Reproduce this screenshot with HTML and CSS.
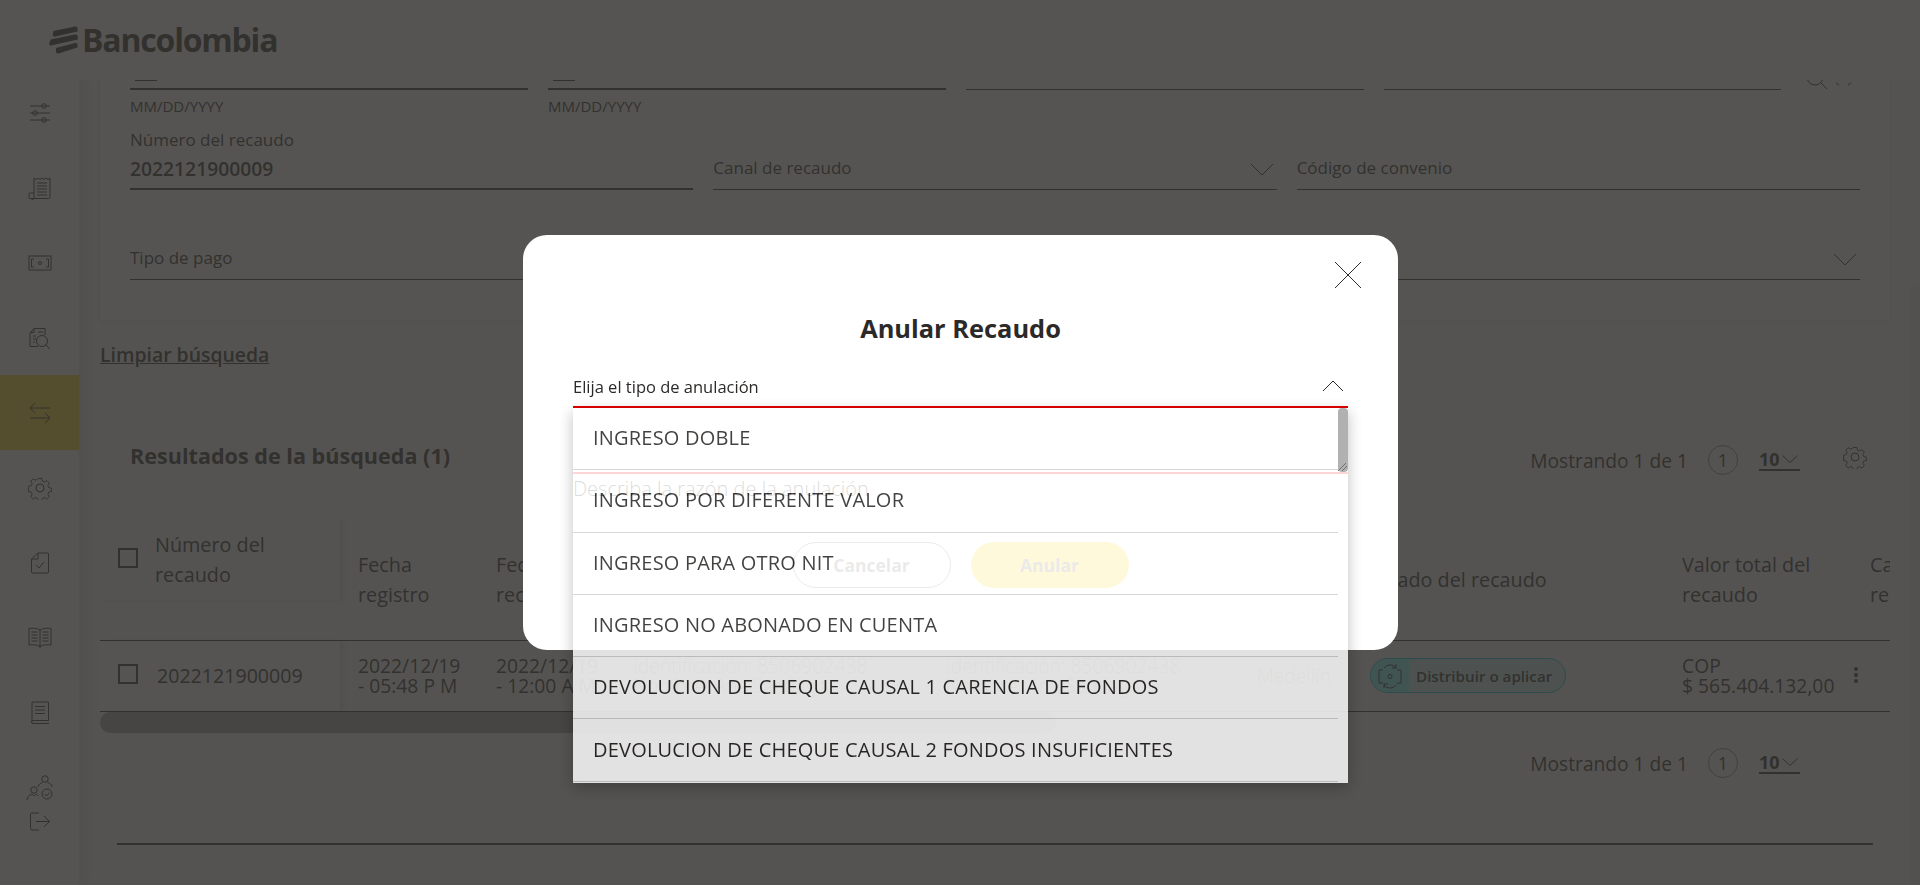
FILE: index.html
```html
<!DOCTYPE html>
<html>
<head>
    <title>Bancolombia - Recaudos</title>
    <meta charset="UTF-8">
    <meta name="viewport" content="width=device-width, initial-scale=1.0">
    <link rel="stylesheet" href="styles.css">
</head>
<body>
    <header class="top-bar">
        <div class="logo">
            <svg class="logo-mark" width="29" height="28" viewBox="0 0 29 28">
                <path d="M4.500 5 L26 .5 Q28.500 0 28.500 2 L28.500 5.500 L6 10.500 Q3.500 11 3.800 8.500 Z"/>
                <path d="M1.500 13.500 L26 8.500 Q28.800 8 28.800 10.500 L28.800 13.500 L2 19.500 Q0 20 .2 17.500 Z"/>
                <path d="M7 22 L26 17 Q28.500 16.500 28.500 19 L28.500 21.500 L9.500 27.500 Q7 28 7 25.500 Z"/>
            </svg>
            <span class="logo-text">Bancolombia</span>
        </div>
    </header>

    <div class="app-shell">
        <nav class="side-nav">
            <a class="nav-item">
                <svg width="22" height="20" viewBox="0 0 22 20"><path d="M1 3h20M1 10h20M1 17h20"/><circle cx="15" cy="3" r="2.300"/><circle cx="6" cy="10" r="2.300"/><circle cx="15" cy="17" r="2.300"/></svg>
            </a>
            <a class="nav-item">
                <svg width="24" height="24" viewBox="0 0 24 24"><path d="M6 17V2l2 1.500L10 2l2 1.500L14 2l2 1.500L18 2l2 1.500L22 2v19a1.500 1.500 0 0 1-1.500 1.500H3"/><path d="M1 18.500a1 1 0 0 1 1-1.500h4v4a1.500 1.500 0 0 1-3 1.500H2a1 1 0 0 1-1-1z"/><path d="M9 7h10M9 10h10M9 13h10M9 16h10M9 19h10"/></svg>
            </a>
            <a class="nav-item">
                <svg width="24" height="16" viewBox="0 0 24 16"><rect x="1" y="1" width="22" height="14"/><path d="M6 4H3.500v8H6M18 4h2.500v8H18"/><circle cx="12" cy="8" r="1.500"/></svg>
            </a>
            <a class="nav-item">
                <svg width="22" height="24" viewBox="0 0 22 24"><path d="M5 2.500h11V9M1 20.500V7l4-4.500v4H1M1 20.500h8"/><path d="M4 10h3M4 13h3M4 16h2M9 6h5"/><circle cx="13" cy="15" r="5.500"/><path d="M17 19l4 4"/></svg>
            </a>
            <a class="nav-item nav-item-active">
                <svg width="22" height="22" viewBox="0 0 22 22"><path d="M21 6H1l5-5M1 6l5 5M1 16h20l-5-5M21 16l-5 5"/></svg>
            </a>
            <a class="nav-item">
                <svg width="24" height="24" viewBox="0 0 24 24"><circle cx="12" cy="12" r="4"/><path d="M10 1.500h4l.6 3 2.300 1 2.600-1.700 2.800 2.800-1.700 2.600 1 2.300 2.900.6v3.800l-2.900.6-1 2.300 1.700 2.600-2.800 2.800-2.600-1.700-2.300 1-.6 2.900h-4l-.6-2.900-2.300-1-2.600 1.700-2.800-2.800 1.700-2.600-1-2.300-2.900-.6V10l2.900-.6 1-2.300-1.700-2.600 2.800-2.800 2.600 1.700 2.300-1z" transform="translate(1.100 1.100) scale(.91)"/></svg>
            </a>
            <a class="nav-item">
                <svg width="18" height="22" viewBox="0 0 18 22"><path d="M7 1h9.500a1 1 0 0 1 1 1v18a1 1 0 0 1-1 1h-15a1 1 0 0 1-1-1V7zM7 1v6H.5"/><path d="M5 13l3 3 5-6"/></svg>
            </a>
            <a class="nav-item">
                <svg width="24" height="22" viewBox="0 0 24 22"><path d="M12 3C9 1 4 1 1 1.500v16.500c3-.5 8-.5 11 1.500 3-2 8-2 11-1.500V1.500C20 1 15 1 12 3zM12 3v18"/><path d="M3.500 5h6M3.500 8h6M3.500 11h6M3.500 14h6M14.500 5h6M14.500 8h6M14.500 11h6M14.500 14h6"/></svg>
            </a>
            <a class="nav-item">
                <svg width="20" height="23" viewBox="0 0 20 23"><path d="M2 1h16.500v18.500H3a1.500 1.500 0 0 0 0 3h16M2 1v20"/><path d="M5 5.500h10M5 9h10M5 12.500h10"/></svg>
            </a>
            <a class="nav-item nav-item-people">
                <svg width="28" height="26" viewBox="0 0 28 26"><circle cx="19" cy="4" r="3.200"/><path d="M12 12c.5-3 3-4 4.500-4.500M21.500 7.500c2 .5 4.500 2 4.500 4.500"/><circle cx="8" cy="15" r="3.200"/><path d="M1 25c.5-3 2-5 5-6 .5 2 3.500 2 4 0 1 .5 2 1 2.500 2"/><circle cx="21" cy="19" r="5"/><path d="M18.500 19l2 2 3.200-3.500"/></svg>
            </a>
            <a class="nav-item nav-item-logout">
                <svg width="20" height="19" viewBox="0 0 20 19"><path d="M9 1H2a1.500 1.500 0 0 0-1.500 1.500v14A1.500 1.500 0 0 0 2 18h7M6 9.500h13.500M14 4l5.500 5.500L14 15"/></svg>
            </a>
        </nav>

        <main class="main-view">
            <div class="main-inner">
                <section class="search-card">
                    <div class="date-row">
                        <div>
                            <div class="date-field"><span class="calendar-top"></span></div>
                            <div class="field-hint">MM/DD/YYYY</div>
                        </div>
                        <div>
                            <div class="date-field"><span class="calendar-top"></span></div>
                            <div class="field-hint">MM/DD/YYYY</div>
                        </div>
                        <div class="date-field date-field-thin"></div>
                        <div class="date-field date-field-thin"></div>
                        <svg class="search-icon" width="50" height="24" viewBox="0 0 50 24"><circle cx="11" cy="10" r="8"/><path d="M17 16l6 6M32 16l3 2M44 18l3-2"/></svg>
                    </div>
                    <div class="field-grid">
                        <div class="field field-filled">
                            <label class="field-label">Número del recaudo</label>
                            <div class="field-value">2022121900009</div>
                        </div>
                        <div class="field">
                            <span class="field-placeholder">Canal de recaudo</span>
                            <svg class="chevron" width="24" height="14" viewBox="0 0 24 14"><path d="M1 1l11 11L23 1"/></svg>
                        </div>
                        <div class="field">
                            <span class="field-placeholder">Código de convenio</span>
                        </div>
                    </div>
                    <div class="field-grid field-grid-last">
                        <div class="field field-short">
                            <span class="field-placeholder">Tipo de pago</span>
                        </div>
                        <div class="field field-short"></div>
                        <div class="field field-short">
                            <svg class="chevron" width="24" height="14" viewBox="0 0 24 14"><path d="M1 1l11 11L23 1"/></svg>
                        </div>
                    </div>
                </section>

                <a class="clear-link">Limpiar búsqueda</a>

                <section class="results-card">
                    <div class="results-head">
                        <h2>Resultados de la búsqueda (1)</h2>
                        <div class="pager">
                            <span>Mostrando 1 de 1</span>
                            <span class="pager-page">1</span>
                            <span class="pager-size">10<svg width="16" height="8" viewBox="0 0 16 8"><path d="M.5.5l7.500 7 7.500-7"/></svg></span>
                        </div>
                        <svg class="results-gear" width="24" height="24" viewBox="0 0 24 24"><circle cx="12" cy="12" r="4"/><path d="M10 1.500h4l.6 3 2.300 1 2.600-1.700 2.800 2.800-1.700 2.600 1 2.300 2.900.6v3.800l-2.900.6-1 2.300 1.700 2.600-2.800 2.800-2.600-1.700-2.300 1-.6 2.900h-4l-.6-2.900-2.300-1-2.600 1.700-2.800-2.800 1.700-2.600-1-2.300-2.900-.6V10l2.900-.6 1-2.300-1.700-2.600 2.800-2.800 2.600 1.700 2.300-1z" transform="translate(1.100 1.100) scale(.91)"/></svg>
                    </div>

                    <div class="results-table">
                        <div class="table-row table-header">
                            <div class="cell cell-sticky">
                                <span class="check-box"></span>
                                <span>Número del<br>recaudo</span>
                            </div>
                            <div class="cell">Fecha<br>registro</div>
                            <div class="cell">Fecha<br>recaudo</div>
                            <div class="cell">Pagador</div>
                            <div class="cell">Beneficiario</div>
                            <div class="cell">Ciudad</div>
                            <div class="cell">Estado del recaudo</div>
                            <div class="cell">Valor total del<br>recaudo</div>
                            <div class="cell">Canal de<br>recaudo</div>
                        </div>
                        <div class="table-row table-body">
                            <div class="cell cell-sticky">
                                <span class="check-box"></span>
                                <span class="row-number">2022121900009</span>
                            </div>
                            <div class="cell">2022/12/19<br>- 05:48 P M</div>
                            <div class="cell">2022/12/19<br>- 12:00 A M</div>
                            <div class="cell cell-light">Identificación: 8506902438<br>Nombre: Ana Santiago</div>
                            <div class="cell cell-light">Identificación: 8506902438<br>Nombre: Ana Santiago</div>
                            <div class="cell cell-light">Medellín</div>
                            <div class="cell">
                                <span class="status-pill">
                                    <span class="status-icon">
                                        <svg width="24" height="26" viewBox="0 0 24 26"><path d="M5 7H1v13h4M19 7h4v13h-4"/><circle cx="12" cy="13.500" r="2"/><path d="M6 5c3-4 9-4 12 0M18 22c-3 4-9 4-12 0M18 1v4h-4M6 25v-4h4"/></svg>
                                    </span>
                                    <span class="status-text">Distribuir o aplicar</span>
                                </span>
                            </div>
                            <div class="cell">COP<br>$ 565.404.132,00</div>
                            <div class="cell cell-dots"><span class="dots"></span></div>
                        </div>
                    </div>
                    <div class="h-scroll"><div class="h-scroll-thumb"></div></div>

                    <div class="results-foot">
                        <div class="pager">
                            <span>Mostrando 1 de 1</span>
                            <span class="pager-page">1</span>
                            <span class="pager-size">10<svg width="16" height="8" viewBox="0 0 16 8"><path d="M.5.5l7.500 7 7.500-7"/></svg></span>
                        </div>
                    </div>
                </section>

                <div class="foot-line"></div>
            </div>
        </main>

        <div class="page-scroll"><div class="page-scroll-thumb"></div></div>
    </div>

    <div class="overlay"></div>

    <div class="modal">
        <button class="modal-close">
            <svg width="28" height="28" viewBox="0 0 28 28"><path d="M1 1l26 26M27 1L1 27"/></svg>
        </button>
        <h1>Anular Recaudo</h1>

        <div class="select-box">
            <div class="select-field">
                <span>Elija el tipo de anulación</span>
                <svg width="22" height="12" viewBox="0 0 22 12"><path d="M1 11L11 1l10 10"/></svg>
            </div>
            <div class="reason-line"></div>
            <div class="reason-text">Describa la razón de la anulación</div>
            <div class="modal-actions">
                <button class="pill-btn pill-cancel">Cancelar</button>
                <button class="pill-btn pill-submit">Anular</button>
            </div>

            <div class="select-panel">
                <ul class="option-list">
                    <li>INGRESO DOBLE</li>
                    <li>INGRESO POR DIFERENTE VALOR</li>
                    <li>INGRESO PARA OTRO NIT</li>
                    <li>INGRESO NO ABONADO EN CUENTA</li>
                    <li>DEVOLUCION DE CHEQUE CAUSAL 1 CARENCIA DE FONDOS</li>
                    <li>DEVOLUCION DE CHEQUE CAUSAL 2 FONDOS INSUFICIENTES</li>
                </ul>
                <div class="panel-scroll">
                    <svg width="10" height="12" viewBox="0 0 10 12"><path d="M0 11l8-8M4 11l5-5"/></svg>
                </div>
            </div>
        </div>
    </div>
</body>
</html>
```

FILE: styles.css
```css
* {
    box-sizing: border-box;
}
html, body {
    height: 100%;
}
body {
    margin: 0;
    overflow: hidden;
    font-family: "Open Sans", "Liberation Sans", sans-serif;
    color: #2c2a29;
    background: #f8f8f8;
}
svg {
    fill: none;
    stroke: #2c2a29;
    stroke-width: 1;
}

/* header */
.top-bar {
    height: 80px;
    background: #fff;
    position: relative;
    z-index: 3;
    display: flex;
    align-items: center;
    padding-left: 49px;
}
.logo {
    display: flex;
    align-items: center;
    gap: 4px;
}
.logo-mark {
    stroke: none;
    fill: #2c2a29;
}
.logo-text {
    font-size: 32px;
    font-weight: 700;
    letter-spacing: -1.2px;
    line-height: 40px;
}

/* shell */
.app-shell {
    display: flex;
    height: 805px;
}
.side-nav {
    width: 79px;
    flex: none;
    background: #fff;
    box-shadow: 4px 0 14px rgba(0,0,0,0.12);
    position: relative;
    z-index: 2;
    display: flex;
    flex-direction: column;
    margin-top: -5px;
}
.nav-item {
    height: 75px;
    flex: none;
    display: flex;
    align-items: center;
    justify-content: center;
}
.nav-item-active {
    background: #fdda24;
}
.nav-item-people {
    height: 60px;
    padding-top: 15px;
}
.nav-item-logout {
    height: 22px;
}

.main-view {
    flex: 1;
    overflow: hidden;
    padding: 0 20px 0 21px;
}
.main-inner {
    margin-top: -40px;
}

/* search filters */
.search-card {
    background: #fff;
    padding: 0 30px 40px;
    height: 280px;
    box-shadow: 0 1px 6px rgba(0,0,0,0.1);
}
.date-row {
    display: grid;
    grid-template-columns: 398px 398px 398px 397px auto;
    column-gap: 20px;
    align-items: start;
}
.date-field {
    height: 50px;
    border-bottom: 2px solid #2c2a29;
    position: relative;
}
.date-field-thin {
    border-bottom-width: 1px;
}
.calendar-top {
    position: absolute;
    left: 5px;
    bottom: 7px;
    width: 22px;
    height: 1px;
    background: #2c2a29;
}
.field-hint {
    font-size: 15px;
    font-weight: 400;
    line-height: 32px;
    height: 40px;
}
.search-icon {
    margin-top: 27px;
    margin-left: 3px;
}
.field-grid {
    display: grid;
    grid-template-columns: repeat(3, 1fr);
    column-gap: 20px;
}
.field-grid-last {
    margin-top: 50px;
}
.field {
    height: 60px;
    border-bottom: 1px solid #2c2a29;
    position: relative;
    display: flex;
    align-items: flex-end;
    justify-content: space-between;
    padding-bottom: 9px;
}
.field-short {
    height: 40px;
}
.field-filled {
    display: block;
    padding: 0;
    border-bottom-width: 2px;
}
.field-label {
    display: block;
    font-size: 17px;
    font-weight: 400;
    line-height: 20px;
}
.field-value {
    font-size: 19.300px;
    font-weight: 600;
    line-height: 30px;
    margin-top: 4px;
}
.field-placeholder {
    font-size: 17px;
    font-weight: 400;
    line-height: 24px;
}
.chevron {
    position: absolute;
    right: 3px;
    bottom: 12px;
}

.clear-link {
    display: block;
    margin: 25px 0 35px;
    font-size: 19.400px;
    font-weight: 600;
    line-height: 20px;
    text-decoration: underline;
}

/* results */
.results-card {
    background: #f9f9f9;
    height: 402px;
}
.results-head {
    height: 120px;
    display: flex;
    align-items: center;
    padding: 0 23px 0 30px;
}
.results-head h2 {
    margin: -9px 0 0;
    font-size: 21.600px;
    font-weight: 700;
    flex: 1;
}
.results-gear {
    margin: -6px 0 0 43px;
}
.pager {
    display: flex;
    align-items: center;
    font-size: 19.200px;
    font-weight: 400;
}
.pager-page {
    width: 30px;
    height: 30px;
    margin: 0 21px 0 20px;
    border: 1px solid #8b8a89;
    border-radius: 50%;
    display: flex;
    align-items: center;
    justify-content: center;
    font-size: 18px;
    font-weight: 400;
}
.pager-size {
    display: flex;
    align-items: center;
    font-size: 18px;
    font-weight: 700;
    width: 41px;
    border-bottom: 2px solid #2c2a29;
    line-height: 20px;
    gap: 2px;
}

.results-table {
    overflow: hidden;
}
.table-row {
    display: grid;
    grid-template-columns: 240px 138px 137px 313px 311px 113px 312px 188px 100px;
    border-bottom: 1px solid #2c2a29;
    width: 1952px;
    font-size: 19.800px;
}
.cell {
    padding-left: 18px;
    display: flex;
    flex-direction: column;
    justify-content: center;
    white-space: nowrap;
}
.table-header {
    height: 121px;
    line-height: 30px;
}
.table-body {
    height: 71px;
    font-size: 19.300px;
    line-height: 20px;
    font-weight: 400;
}
.cell-light {
    font-weight: 300;
}
.cell-sticky {
    flex-direction: row;
    justify-content: flex-start;
    align-items: center;
    gap: 17px;
    box-shadow: 3px 0 5px rgba(0,0,0,0.12);
    background: #fbfbfb;
}
.table-header .cell-sticky {
    height: 80px;
    background: #f6f6f6;
}
.table-body .cell-sticky {
    gap: 19px;
}
.check-box {
    width: 20px;
    height: 20px;
    flex: none;
    border: 2px solid #2c2a29;
    margin-top: -4px;
}
.row-number {
    font-size: 19.600px;
}
.status-pill {
    display: flex;
    align-items: center;
    width: 196px;
    height: 35px;
    border: 1px solid #00c8d8;
    border-radius: 18px;
    background: #cdf3f7;
    overflow: hidden;
    font-size: 15.200px;
    font-weight: 600;
    margin-top: -1px;
}
.status-icon {
    width: 38px;
    height: 100%;
    flex: none;
    background: #80ffff;
    display: flex;
    align-items: center;
    justify-content: center;
}
.status-text {
    padding-left: 7px;
}
.cell-dots {
    padding-left: 0;
}
.dots {
    width: 4px;
    height: 4px;
    margin-left: 2px;
    margin-top: -2px;
    border-radius: 50%;
    background: #2c2a29;
    box-shadow: 0 -6px 0 #2c2a29, 0 6px 0 #2c2a29;
}
.h-scroll {
    height: 21px;
}
.h-scroll-thumb {
    width: 956px;
    height: 100%;
    border-radius: 11px;
    background: #a4a3a1;
}
.results-foot {
    height: 60px;
    display: flex;
    justify-content: flex-end;
    align-items: center;
    padding-right: 90px;
}
.foot-line {
    margin: 41px 17px 0;
    height: 2px;
    background: #2c2a29;
}

.page-scroll {
    width: 10px;
    flex: none;
    background: #fafafa;
}
.page-scroll-thumb {
    margin-top: 203px;
    height: 602px;
    border-radius: 5px 5px 0 0;
    background: #ececec;
}

/* modal */
.overlay {
    position: fixed;
    inset: 0;
    z-index: 10;
    background: rgba(52,50,48,0.834);
}
.modal {
    position: fixed;
    z-index: 11;
    left: 523px;
    top: 235px;
    width: 875px;
    height: 415px;
    background: #fff;
    border-radius: 24px;
    padding: 0 50px;
}
.modal-close {
    position: absolute;
    right: 36px;
    top: 26px;
    width: 28px;
    height: 28px;
    padding: 0;
    border: none;
    background: none;
}
.modal-close svg {
    display: block;
}
.modal h1 {
    margin: 0;
    padding-top: 76px;
    font-size: 25.400px;
    font-weight: 700;
    line-height: 34px;
    text-align: center;
}
.select-box {
    position: relative;
    margin-top: 28px;
}
.select-field {
    height: 35px;
    border-bottom: 2px solid #d60000;
    display: flex;
    justify-content: space-between;
    align-items: center;
    padding: 0 4px 7px 0;
    font-size: 16.500px;
    font-weight: 400;
    position: relative;
    z-index: 1;
}
.reason-line {
    height: 2px;
    margin-top: 64px;
    background: #ff0000;
}
.reason-text {
    font-size: 20px;
    font-weight: 300;
    line-height: 24px;
    margin-top: 3px;
}
.modal-actions {
    display: flex;
    justify-content: center;
    gap: 20px;
    margin-top: 41px;
}
.pill-btn {
    width: 158px;
    height: 46px;
    border-radius: 23px;
    font-family: inherit;
    font-size: 17.500px;
    font-weight: 700;
    color: #2c2a29;
    padding-bottom: 2px;
}
.pill-cancel {
    background: #fff;
    border: 1px solid #2c2a29;
    opacity: 0.6;
}
.pill-submit {
    background: #fdda24;
    border: none;
    color: #808080;
}

.select-panel {
    position: absolute;
    left: 0;
    right: 0;
    top: 35px;
    height: 375px;
    background: #fff;
    opacity: 0.835;
    box-shadow: 0 4px 14px rgba(0,0,0,0.3);
    padding-right: 10px;
}
.option-list {
    list-style: none;
    margin: 0;
    padding: 0;
}
.option-list li {
    height: 62.300px;
    display: flex;
    align-items: center;
    padding-left: 20px;
    padding-bottom: 2px;
    border-bottom: 1px solid #cfcfcf;
    font-size: 20px;
    letter-spacing: 0.2px;
    font-weight: 400;
    color: #1f1d1c;
    white-space: nowrap;
}
.panel-scroll {
    position: absolute;
    top: 0;
    right: 0;
    width: 10px;
    height: 64px;
    border-radius: 4px;
    background: #a2a2a2;
}
.panel-scroll svg {
    position: absolute;
    bottom: 0;
    right: 0;
    stroke: #555;
}
```
